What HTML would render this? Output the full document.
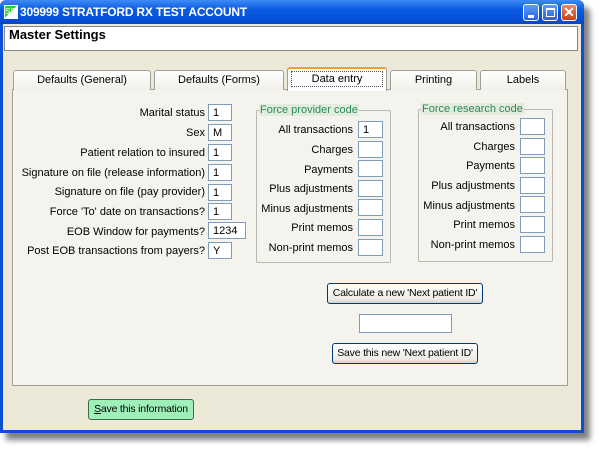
<!DOCTYPE html>
<html><head><style>
*{box-sizing:border-box;margin:0;padding:0}
body{width:600px;height:451px;background:#fff;position:relative;overflow:hidden;font-family:"Liberation Sans",Arial,sans-serif;font-size:11px;color:#000}
.a{position:absolute;white-space:nowrap}
.win{left:0;top:0;width:584px;height:433px;background:#0a4fd6;border-radius:6px 6px 0 0;box-shadow:6px 7px 6px rgba(0,0,0,.5)}
.title{left:0;top:0;width:584px;height:24px;border-radius:6px 6px 0 0;background:linear-gradient(#3d8cf5,#0a5ae0 40%,#0550d8 80%,#0a45c0)}
.body{left:3px;top:24px;width:578px;height:406px;background:#ece9d8}
.lbl{text-align:right;width:200px;font-size:11px}
.in{background:#fff;border:1px solid #7f9db9;height:17px;padding:2px 4px;font-size:11px}
.grp{border:1px solid #b8b8b0;border-radius:2px}
.gt{background:#e2ecdc;color:#2a8a5a;font-size:11px;padding:0 1px}
.btn{border:1px solid #003c74;border-radius:3px;background:linear-gradient(#fff,#ecebe6 80%,#d6d0c5);text-align:center;font-size:10.5px;letter-spacing:-.2px;line-height:19px}
.tab{top:70px;height:20px;border:1px solid #a0a098;border-bottom:none;border-radius:3px 3px 0 0;background:linear-gradient(#fff,#f0efe8);text-align:center;line-height:19px}
.tb{width:16px;height:17px;top:4px;border:1px solid #fff;border-radius:3px}
</style></head><body>
<div class="a win"></div>
<div class="a title"></div>
<div class="a" style="left:4px;top:5px;width:14px;height:14px;background:linear-gradient(135deg,#3c3 50%,#fff 50%);border:1px solid #fff;font-size:8px;color:#fff;line-height:12px">SS</div>
<div class="a" style="left:20px;top:5px;color:#fff;font-weight:bold;font-size:12px;letter-spacing:-.2px">309999 STRATFORD RX TEST ACCOUNT</div>
<div class="a tb" style="left:523px;background:linear-gradient(#5b9bf8,#2663e0)"><div class="a" style="left:4px;top:10px;width:6px;height:3px;background:#fff"></div></div>
<div class="a tb" style="left:542px;background:linear-gradient(#5b9bf8,#2663e0)"><div class="a" style="left:3px;top:3px;width:9px;height:9px;border:1px solid #fff;border-top-width:2px"></div></div>
<div class="a tb" style="left:561px;background:linear-gradient(#e88a6a,#c8401a);color:#fff;font-size:14px;line-height:15px;text-align:center;font-weight:bold">✕</div>
<div class="a body"></div>
<div class="a" style="left:4px;top:26px;width:574px;height:25px;background:#fff;border:1px solid #888"></div>
<div class="a" style="left:9px;top:27px;font-size:13px;font-weight:bold">Master Settings</div>
<div class="a" style="left:12px;top:89px;width:556px;height:297px;background:#f4f3ee;border:1px solid #a0a098"></div>
<div class="a tab" style="left:13px;width:138px">Defaults (General)</div>
<div class="a tab" style="left:154px;width:130px">Defaults (Forms)</div>
<div class="a tab" style="left:287px;top:67px;height:24px;width:100px;border-top:2px solid #f0a030;background:#fcfcfe"><div style="margin:2px 3px;border:1px dotted #555;line-height:14px">Data entry</div></div>
<div class="a tab" style="left:390px;width:87px">Printing</div>
<div class="a tab" style="left:480px;width:86px">Labels</div>

<div class="a lbl" style="left:5px;top:107px">Marital status</div><div class="a in" style="left:208px;top:104px;width:24px">1</div>
<div class="a lbl" style="left:5px;top:127px">Sex</div><div class="a in" style="left:208px;top:124px;width:24px">M</div>
<div class="a lbl" style="left:5px;top:147px">Patient relation to insured</div><div class="a in" style="left:208px;top:144px;width:24px">1</div>
<div class="a lbl" style="left:5px;top:167px">Signature on file (release information)</div><div class="a in" style="left:208px;top:164px;width:24px">1</div>
<div class="a lbl" style="left:5px;top:186px">Signature on file (pay provider)</div><div class="a in" style="left:208px;top:184px;width:24px">1</div>
<div class="a lbl" style="left:5px;top:206px">Force 'To' date on transactions?</div><div class="a in" style="left:208px;top:203px;width:24px">1</div>
<div class="a lbl" style="left:5px;top:226px">EOB Window for payments?</div><div class="a in" style="left:208px;top:222px;width:38px">1234</div>
<div class="a lbl" style="left:5px;top:245px">Post EOB transactions from payers?</div><div class="a in" style="left:208px;top:242px;width:24px">Y</div>

<div class="a grp" style="left:256px;top:110px;width:135px;height:153px"></div>
<div class="a gt" style="left:259px;top:104px">Force provider code</div>
<div class="a grp" style="left:418px;top:109px;width:135px;height:153px"></div>
<div class="a gt" style="left:421px;top:103px">Force research code</div>

<div class="a lbl" style="left:153px;top:124px">All transactions</div><div class="a in" style="left:358px;top:121px;width:25px">1</div>
<div class="a lbl" style="left:153px;top:144px">Charges</div><div class="a in" style="left:358px;top:141px;width:25px"></div>
<div class="a lbl" style="left:153px;top:164px">Payments</div><div class="a in" style="left:358px;top:160px;width:25px"></div>
<div class="a lbl" style="left:153px;top:183px">Plus adjustments</div><div class="a in" style="left:358px;top:180px;width:25px"></div>
<div class="a lbl" style="left:153px;top:203px">Minus adjustments</div><div class="a in" style="left:358px;top:199px;width:25px"></div>
<div class="a lbl" style="left:153px;top:222px">Print memos</div><div class="a in" style="left:358px;top:219px;width:25px"></div>
<div class="a lbl" style="left:153px;top:242px">Non-print memos</div><div class="a in" style="left:358px;top:239px;width:25px"></div>

<div class="a lbl" style="left:315px;top:121px">All transactions</div><div class="a in" style="left:520px;top:118px;width:25px"></div>
<div class="a lbl" style="left:315px;top:141px">Charges</div><div class="a in" style="left:520px;top:138px;width:25px"></div>
<div class="a lbl" style="left:315px;top:160px">Payments</div><div class="a in" style="left:520px;top:157px;width:25px"></div>
<div class="a lbl" style="left:315px;top:180px">Plus adjustments</div><div class="a in" style="left:520px;top:177px;width:25px"></div>
<div class="a lbl" style="left:315px;top:200px">Minus adjustments</div><div class="a in" style="left:520px;top:196px;width:25px"></div>
<div class="a lbl" style="left:315px;top:219px">Print memos</div><div class="a in" style="left:520px;top:216px;width:25px"></div>
<div class="a lbl" style="left:315px;top:239px">Non-print memos</div><div class="a in" style="left:520px;top:236px;width:25px"></div>

<div class="a btn" style="left:327px;top:283px;width:156px;height:21px">Calculate a new 'Next patient ID'</div>
<div class="a in" style="left:359px;top:314px;width:93px;height:19px"></div>
<div class="a btn" style="left:332px;top:343px;width:146px;height:21px">Save this new 'Next patient ID'</div>

<div class="a btn" style="left:88px;top:399px;width:106px;height:21px;background:#9ef0b8;border-color:#3a6a4a"><u>S</u>ave this information</div>
</body></html>
